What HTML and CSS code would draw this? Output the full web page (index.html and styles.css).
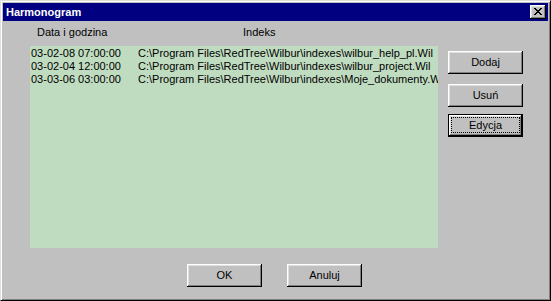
FILE: index.html
```html
<!DOCTYPE html>
<html lang="pl">
<head>
<meta charset="utf-8">
<title>Harmonogram</title>
<link rel="stylesheet" href="styles.css">
</head>
<body>
<div class="window">
  <div class="titlebar">
    <span class="title">Harmonogram</span>
    <div class="close">
      <svg width="8" height="7" viewBox="0 0 8 7" shape-rendering="crispEdges"><path d="M0 0h2v1h-2zM6 0h2v1h-2zM1 1h2v1h-2zM5 1h2v1h-2zM2 2h4v1h-4zM3 3h2v1h-2zM2 4h4v1h-4zM1 5h2v1h-2zM5 5h2v1h-2zM0 6h2v1h-2zM6 6h2v1h-2z" fill="#000"/></svg>
    </div>
  </div>
  <div class="client">
    <div class="main">
      <div class="list">
        <div class="list-head">
          <span class="head-date">Data i godzina</span>
          <span class="head-index">Indeks</span>
        </div>
        <div class="list-body">
          <div class="row"><span class="c-date">03-02-08 07:00:00</span><span class="c-index">C:\Program Files\RedTree\Wilbur\indexes\wilbur_help_pl.Wil</span></div>
          <div class="row"><span class="c-date">03-02-04 12:00:00</span><span class="c-index">C:\Program Files\RedTree\Wilbur\indexes\wilbur_project.Wil</span></div>
          <div class="row"><span class="c-date">03-03-06 03:00:00</span><span class="c-index">C:\Program Files\RedTree\Wilbur\indexes\Moje_dokumenty.Wil</span></div>
        </div>
      </div>
      <div class="side">
        <div class="btn btn-add">Dodaj</div>
        <div class="btn btn-del">Usuń</div>
        <div class="btn btn-default btn-edit"><span class="focus">Edycja</span></div>
      </div>
    </div>
    <div class="bottom">
      <div class="btn">OK</div>
      <div class="btn">Anuluj</div>
    </div>
  </div>
</div>
</body>
</html>
```
FILE: styles.css
```css
html, body {
  margin: 0;
  padding: 0;
  background: #c0c0c0;
}
.window {
  box-sizing: border-box;
  width: 551px;
  height: 301px;
  background: #c0c0c0;
  border: 1px solid;
  border-color: #dfdfdf #000 #000 #dfdfdf;
  box-shadow: inset 1px 1px #fff, inset -1px -1px #808080;
  padding: 2px;
  font-family: "Liberation Sans Narrow", "Liberation Sans", Arial, sans-serif;
  font-size: 11px;
  color: #000;
  display: flex;
  flex-direction: column;
}
.titlebar {
  height: 18px;
  background: #000080;
  display: flex;
  align-items: center;
  padding: 0 2px 0 3px;
}
.title {
  flex: 1;
  color: #fff;
  font-family: "Liberation Sans", Arial, sans-serif;
  font-weight: bold;
  font-size: 11px;
  line-height: 13px;
}
.close {
  width: 16px;
  height: 14px;
  box-sizing: border-box;
  background: #c0c0c0;
  box-shadow: inset -1px -1px #000, inset 1px 1px #fff, inset -2px -2px #808080, inset 2px 2px #dfdfdf;
  display: flex;
  align-items: center;
  justify-content: center;
  padding: 0 1px 1px 0;
}
.close svg {
  display: block;
}
.client {
  flex: 1;
  display: flex;
  flex-direction: column;
}
.main {
  display: flex;
  height: 227px;
}
.list {
  margin-left: 27px;
  width: 408px;
  display: flex;
  flex-direction: column;
}
.list-head {
  height: 25px;
  box-sizing: border-box;
  padding-top: 5px;
  line-height: 13px;
  display: flex;
  white-space: nowrap;
}
.head-date {
  width: 206px;
  padding-left: 7px;
}
.list-body {
  flex: 1;
  background: #c0dcc0;
  padding-top: 1px;
  overflow: hidden;
  white-space: nowrap;
}
.row {
  height: 13px;
  line-height: 13px;
  display: flex;
}
.c-date {
  width: 107px;
  flex: none;
  padding-left: 1px;
  box-sizing: border-box;
}
.c-index {
  padding-left: 1px;
}
.side {
  margin-left: 10px;
  padding-top: 30px;
  display: flex;
  flex-direction: column;
}
.btn {
  box-sizing: border-box;
  width: 75px;
  height: 23px;
  background: #c0c0c0;
  box-shadow: inset -1px -1px #000, inset 1px 1px #fff, inset -2px -2px #808080, inset 2px 2px #dfdfdf;
  display: flex;
  align-items: center;
  justify-content: center;
  line-height: 13px;
  padding-bottom: 1px;
}
.btn-del {
  margin-top: 10px;
}
.btn-edit {
  margin-top: 7px;
}
.btn-default {
  border: 1px solid #000;
  box-shadow: inset -1px -1px #000, inset 1px 1px #fff, inset -2px -2px #808080, inset 2px 2px #dfdfdf;
}
.focus {
  box-sizing: border-box;
  width: 67px;
  height: 14px;
  outline: 1px dotted #000;
  display: flex;
  align-items: center;
  justify-content: center;
}
.bottom {
  display: flex;
  padding-top: 16px;
  padding-left: 184px;
  gap: 25px;
}
```
